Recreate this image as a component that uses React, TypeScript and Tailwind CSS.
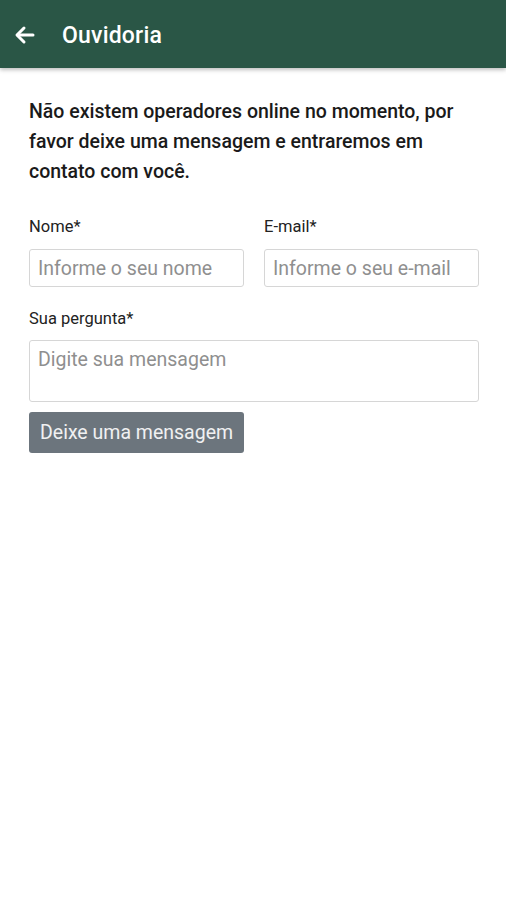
import React from "react";

export default function App() {
  return (
    <div className="min-h-[900px] w-full bg-white" style={{ fontFamily: "Roboto, 'Noto Sans', sans-serif" }}>
      <header className="flex h-[68px] items-center bg-[#2a5646] shadow-[0_2px_4px_rgba(0,0,0,0.25)]">
        <svg className="ml-[13px] mt-[2px]" width="24" height="24" viewBox="0 0 24 24" fill="none" stroke="white" strokeWidth="3" strokeLinecap="round" strokeLinejoin="round">
          <path d="M20 12H5" />
          <path d="M11 5l-7 7 7 7" />
        </svg>
        <h1 className="ml-[25px] mt-[4px] text-[23px] font-medium tracking-[0.2px] text-white">Ouvidoria</h1>
      </header>
      <main className="pl-[29px] pr-[27px] pt-[29px]">
        <p className="text-[19.5px] font-medium leading-[30px] text-[#1a1a1a] pr-[4px]">
          Não existem operadores online no momento, por favor deixe uma mensagem e entraremos em contato com você.
        </p>
        <div className="mt-[30px] grid grid-cols-2 gap-[20px]">
          <div>
            <label className="block text-[16.5px] leading-[20px] text-[#222]">Nome*</label>
            <input
              className="mt-[12px] h-[38px] w-full rounded-[3px] border border-[#d6d6d6] px-[8px] text-[19.5px] text-[#333] placeholder-[#8f8f8f] outline-none"
              placeholder="Informe o seu nome"
            />
          </div>
          <div>
            <label className="block text-[16.5px] leading-[20px] text-[#222]">E-mail*</label>
            <input
              className="mt-[12px] h-[38px] w-full rounded-[3px] border border-[#d6d6d6] px-[8px] text-[19.5px] text-[#333] placeholder-[#8f8f8f] outline-none"
              placeholder="Informe o seu e-mail"
            />
          </div>
        </div>
        <label className="mt-[22px] block text-[16.5px] leading-[20px] text-[#222]">Sua pergunta*</label>
        <textarea
          className="mt-[11px] block h-[62px] w-full resize-none rounded-[3px] border border-[#d6d6d6] px-[8px] py-[7px] text-[19.5px] leading-[24px] text-[#333] placeholder-[#8f8f8f] outline-none"
          placeholder="Digite sua mensagem"
        />
        <button className="mt-[10px] h-[41px] rounded-[3px] bg-[#6c757d] px-[11px] text-[19.5px] text-white/90">
          Deixe uma mensagem
        </button>
      </main>
    </div>
  );
}
